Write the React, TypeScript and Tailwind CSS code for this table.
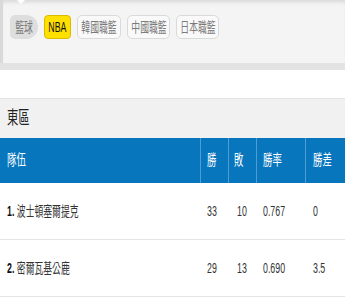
import React from "react";

const cjk = { fontFamily: '"Liberation Sans", "Noto Sans CJK TC", sans-serif' };

function Sq({ children, className = "" }: { children: React.ReactNode; className?: string }) {
  return (
    <span className={"inline-block whitespace-nowrap scale-x-[0.63] origin-left " + className}>{children}</span>
  );
}

function Pill({ label, w, variant }: { label: string; w: string; variant: "gray" | "yellow" | "white" }) {
  const base = "flex h-[24px] items-center justify-center text-[14px] overflow-hidden ";
  const styles =
    variant === "gray"
      ? "bg-[#dedede] text-[#7a7a7a] rounded-l-[5px] rounded-r-[12px]"
      : variant === "yellow"
      ? "bg-[#ffe000] text-[#111] border border-[#d9bc00] rounded-[4px]"
      : "bg-[#f9f9f9] text-[#7a7a7a] border border-[#dadada] rounded-[5px]";
  return (
    <div className={base + styles + " " + w}>
      <span className="inline-block whitespace-nowrap scale-x-[0.63] origin-center">{label}</span>
    </div>
  );
}

const rows = [
  { rank: "1.", name: "波士頓塞爾提克", w: "33", l: "10", pct: "0.767", gb: "0" },
  { rank: "2.", name: "密爾瓦基公鹿", w: "29", l: "13", pct: "0.690", gb: "3.5" },
];

export default function App() {
  return (
    <div className="relative w-[345px] h-[300px] overflow-hidden bg-white" style={cjk}>
      <div className="relative h-[63px] bg-[#f4f4f4] border-l-[3px] border-[#d9d9d9] shadow-[inset_0_4px_4px_-2px_rgba(0,0,0,0.12)]">
        <div className="absolute left-[14px] top-0 w-0 h-0 border-l-[4px] border-r-[4px] border-t-[4px] border-l-transparent border-r-transparent border-t-white" />
        <div className="flex items-center gap-[6px] pl-[7px] pt-[15px]">
          <Pill label="籃球" w="w-[28px]" variant="gray" />
          <Pill label="NBA" w="w-[27px]" variant="yellow" />
          <Pill label="韓國職籃" w="w-[44px]" variant="white" />
          <Pill label="中國職籃" w="w-[43px]" variant="white" />
          <Pill label="日本職籃" w="w-[43px]" variant="white" />
        </div>
      </div>
      <div className="h-[7px] bg-[#e3e3e3]" />
      <div className="h-[28px] bg-white" />
      <div className="h-[40px] bg-[#f1f1f1] border-t border-[#e4e4e4] flex items-center pl-[7px] text-[18px] text-[#222]">
        <Sq>東區</Sq>
      </div>
      <div className="flex h-[45px] bg-[#0776bd] text-white text-[15px]">
        <div className="w-[200px] flex items-center pl-[7px]"><Sq>隊伍</Sq></div>
        <div className="w-[28px] flex items-center pl-[6px] border-l border-[#4f9dd3]"><Sq>勝</Sq></div>
        <div className="w-[28px] flex items-center pl-[5px] border-l border-[#4f9dd3]"><Sq>敗</Sq></div>
        <div className="w-[49px] flex items-center pl-[6px] border-l border-[#4f9dd3]"><Sq>勝率</Sq></div>
        <div className="flex-1 flex items-center pl-[7px] border-l border-[#4f9dd3]"><Sq>勝差</Sq></div>
      </div>
      {rows.map((r) => (
        <div key={r.rank} className="flex h-[57px] border-b border-[#e6e6e6] text-[#333]">
          <div className="w-[200px] flex items-center pl-[7px] text-[14px]">
            <Sq>
              <span className="font-bold text-[#111]">{r.rank}</span> {r.name}
            </Sq>
          </div>
          <div className="w-[28px] flex items-center pl-[7px] text-[14px]"><Sq>{r.w}</Sq></div>
          <div className="w-[28px] flex items-center pl-[9px] text-[14px]"><Sq>{r.l}</Sq></div>
          <div className="w-[49px] flex items-center pl-[7px] text-[14px]"><Sq>{r.pct}</Sq></div>
          <div className="flex-1 flex items-center pl-[8px] text-[14px]"><Sq>{r.gb}</Sq></div>
        </div>
      ))}
    </div>
  );
}
